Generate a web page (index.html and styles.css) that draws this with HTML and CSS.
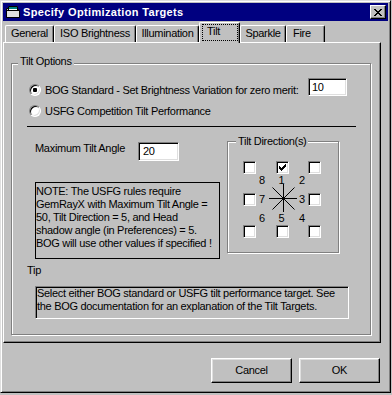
FILE: index.html
```html
<!DOCTYPE html>
<html>
<head>
<meta charset="utf-8">
<link rel="stylesheet" href="styles.css">
</head>
<body>
<div class="window">
  <div class="titlebar">
    <svg class="app-icon" width="14" height="12" viewBox="0 0 14 12">
      <path d="M0.5 2.5h5l1 1h6v8h-12z" fill="#c0c0c0" stroke="#000"/>
      <path d="M2.5 0.5h9v8h-9z" fill="#fff" stroke="#000"/>
      <path d="M3 1h8v2h-8z" fill="#008080"/>
      <path d="M1 5h12v6h-12z" fill="#dfdfdf"/>
      <path d="M0.5 4.5h13v7h-13z" fill="none" stroke="#000"/>
    </svg>
    <span class="title">Specify Optimization Targets</span>
    <button class="close" type="button">
      <svg width="8" height="7" viewBox="0 0 8 7"><path d="M0 0h2v1h-2zM6 0h2v1h-2zM1 1h2v1h-2zM5 1h2v1h-2zM2 2h4v1h-4zM3 3h2v1h-2zM2 4h4v1h-4zM1 5h2v1h-2zM5 5h2v1h-2zM0 6h2v1h-2zM6 6h2v1h-2z" fill="#000"/></svg>
    </button>
  </div>

  <div class="tabs">
    <div class="tab tab-general">General</div>
    <div class="tab tab-iso">ISO Brightness</div>
    <div class="tab tab-illum">Illumination</div>
    <div class="tab tab-tilt active"><span class="focus">Tilt</span></div>
    <div class="tab tab-sparkle">Sparkle</div>
    <div class="tab tab-fire">Fire</div>
  </div>

  <div class="panel">
    <div class="group options">
      <div class="group-title">Tilt Options</div>
      <div class="row row-bog">
        <span class="radio checked"></span>
        <span class="label bog-label">BOG Standard - Set Brightness Variation for zero merit:</span>
        <span class="edit edit-10">10</span>
      </div>
      <div class="row row-usfg">
        <span class="radio"></span>
        <span class="label">USFG Competition Tilt Performance</span>
      </div>
      <div class="sep"></div>
      <div class="mid">
        <div class="left">
          <div class="row angle-row">
            <span class="angle-label">Maximum Tilt Angle</span>
            <span class="edit edit-20">20</span>
          </div>
          <div class="note">NOTE: The USFG rules require<br>GemRayX with Maximum Tilt Angle =<br>50, Tilt Direction = 5, and Head<br>shadow angle (in Preferences) = 5.<br>BOG will use other values if specified !</div>
        </div>
        <div class="group dirs">
          <div class="group-title dirs-title">Tilt Direction(s)</div>
          <svg class="star" width="30" height="30" viewBox="0 0 30 30">
            <path d="M1 15.5H29M15.5 1V29M4.5 4.5L26.5 26.5M26.5 4.5L4.5 26.5" stroke="#000" stroke-width="1" fill="none"/>
          </svg>
          <div class="compass">
            <span class="check c1"></span>
            <span class="check c2 checked"><svg width="7" height="7" viewBox="0 0 7 7"><path d="M6 0h1v1h-1zM5 1h2v1h-2zM0 2h1v1h-1zM4 2h3v1h-3zM0 3h2v1h-2zM3 3h3v1h-3zM0 4h5v1h-5zM1 5h3v1h-3zM2 6h1v1h-1z" fill="#000"/></svg></span>
            <span class="check c3"></span>
            <span class="digit d8">8</span>
            <span class="digit d1">1</span>
            <span class="digit d2">2</span>
            <span class="check c4"></span>
            <span class="digit d7">7</span>
            <span class="digit d3">3</span>
            <span class="check c5"></span>
            <span class="digit d6">6</span>
            <span class="digit d5">5</span>
            <span class="digit d4">4</span>
            <span class="check c6"></span>
            <span class="check c7"></span>
            <span class="check c8"></span>
          </div>
        </div>
      </div>
      <div class="tip-label">Tip</div>
      <div class="tip">Select either BOG standard or USFG tilt performance target. See<br>the BOG documentation for an explanation of the Tilt Targets.</div>
    </div>
  </div>

  <div class="buttons">
    <button class="btn" type="button">Cancel</button>
    <button class="btn" type="button">OK</button>
  </div>
</div>
</body>
</html>
```

FILE: styles.css
```css
html, body {
  margin: 0;
  padding: 0;
}
body {
  width: 392px;
  height: 395px;
  background: #c0c0c0;
  font-family: "Liberation Sans", Arial, sans-serif;
  font-size: 11px;
  line-height: 13px;
  color: #000;
  letter-spacing: -0.3px;
}
.window {
  width: 391px;
  height: 393px;
  box-sizing: border-box;
  border: 1px solid;
  border-color: #dfdfdf #000 #000 #dfdfdf;
  box-shadow: inset 1px 1px 0 #fff, inset -1px -1px 0 #808080;
  padding: 2px;
  display: flex;
  flex-direction: column;
}
.titlebar {
  height: 18px;
  flex: none;
  background: #000080;
  display: flex;
  align-items: center;
  padding-left: 3px;
}
.app-icon {
  flex: none;
  margin-right: 3px;
}
.title {
  color: #fff;
  font-weight: bold;
  letter-spacing: 0.35px;
}
.close {
  margin: 0 2px 0 auto;
  width: 16px;
  height: 14px;
  padding: 0;
  box-sizing: border-box;
  background: #c0c0c0;
  border: 1px solid;
  border-color: #fff #000 #000 #fff;
  box-shadow: inset -1px -1px 0 #808080;
  display: flex;
  align-items: center;
  justify-content: center;
}
.close svg {
  display: block;
  margin-left: -1px;
}

.tabs {
  height: 21px;
  flex: none;
  display: flex;
  align-items: flex-end;
  padding-left: 2px;
}
.tab {
  box-sizing: border-box;
  height: 17px;
  border-top: 1px solid #fff;
  border-left: 1px solid #fff;
  border-right: 1px solid #000;
  border-radius: 2px 2px 0 0;
  box-shadow: inset -1px 0 0 #808080;
  padding-top: 1px;
  text-align: center;
  white-space: nowrap;
}
.tab-general { width: 49px; }
.tab-iso { width: 82px; }
.tab-illum { width: 63px; }
.tab-tilt { width: 41px; }
.tab-sparkle { width: 46px; }
.tab-fire { width: 39px; text-align: left; padding-left: 6px; }
.tab.active {
  height: 21px;
  margin-bottom: -1px;
  position: relative;
  z-index: 2;
  background: #c0c0c0;
  text-align: left;
  padding-top: 1px;
}
.focus {
  display: block;
  box-sizing: border-box;
  width: 36px;
  height: 17px;
  margin-left: 2px;
  padding-left: 4px;
  border: 1px dotted #000;
}

.panel {
  flex: none;
  width: 378px;
  height: 301px;
  box-sizing: border-box;
  border: 1px solid;
  border-color: #fff #000 #000 #fff;
  box-shadow: inset -1px -1px 0 #808080;
  position: relative;
  z-index: 1;
}

.group {
  box-sizing: border-box;
  border: 1px solid #808080;
  box-shadow: inset 1px 1px 0 #fff, 1px 1px 0 #fff;
}
.group-title {
  width: fit-content;
  padding: 0 2px;
  background: #c0c0c0;
  white-space: nowrap;
}
.options {
  margin: 20px 0 0 7px;
  width: 360px;
  height: 272px;
}
.options > .group-title {
  margin: -9px 0 0 6px;
}

.row {
  display: flex;
  align-items: flex-start;
}
.row-bog {
  margin-top: 10px;
  padding-left: 17px;
}
.row-bog .radio,
.row-bog .label {
  margin-top: 6px;
}
.row-usfg {
  margin-top: 8px;
  padding-left: 17px;
}
.label {
  margin-left: 4px;
  white-space: nowrap;
}
.bog-label {
  flex: none;
  width: 263px;
}

.radio {
  flex: none;
  width: 12px;
  height: 12px;
  box-sizing: border-box;
  border-radius: 50%;
  border: 1px solid;
  border-color: #808080 #fff #fff #808080;
  box-shadow: inset 1px 1px 0 #000, inset -1px -1px 0 #dfdfdf;
  background: #fff;
  display: flex;
  align-items: center;
  justify-content: center;
}
.radio.checked::after {
  content: "";
  width: 4px;
  height: 4px;
  border-radius: 1px;
  background: #000;
}

.edit {
  flex: none;
  box-sizing: border-box;
  background: #fff;
  border: 1px solid;
  border-color: #808080 #fff #fff #808080;
  box-shadow: inset 1px 1px 0 #000, inset -1px -1px 0 #dfdfdf;
  padding: 2px 0 0 3px;
}
.edit-10 {
  width: 39px;
  height: 18px;
}
.edit-20 {
  width: 41px;
  height: 19px;
  padding-left: 4px;
}

.sep {
  margin: 8px 0 0 15px;
  width: 329px;
  height: 1px;
  background: #000;
}

.mid {
  display: flex;
  align-items: flex-start;
  margin: 14px 0 0 23px;
}
.left {
  width: 185px;
  flex: none;
}
.angle-row {
  margin-top: 1px;
}
.angle-label {
  flex: none;
  width: 103px;
  white-space: nowrap;
}
.note {
  margin-top: 21px;
  height: 77px;
  box-sizing: border-box;
  border: 1px solid #000;
  padding: 2px 0 0 0;
  white-space: nowrap;
  overflow: hidden;
}

.dirs {
  flex: none;
  margin-left: 7px;
  width: 112px;
  height: 112px;
  position: relative;
}
.dirs-title {
  margin: -7px 0 0 8px;
}
.star {
  position: absolute;
  left: 40px;
  top: 41px;
  display: block;
}
.compass {
  margin: 13px 0 0 15px;
  display: grid;
  grid-template-columns: 13px 20px 13px 19px 13px;
  grid-template-rows: 13px 19px 13px 19px 13px;
  position: relative;
}
.check {
  box-sizing: border-box;
  width: 13px;
  height: 13px;
  background: #fff;
  border: 1px solid;
  border-color: #808080 #fff #fff #808080;
  box-shadow: inset 1px 1px 0 #000, inset -1px -1px 0 #dfdfdf;
  display: flex;
  align-items: center;
  justify-content: center;
}
.check svg { display: block; }
.c1 { grid-area: 1 / 1; }
.c2 { grid-area: 1 / 3; }
.c3 { grid-area: 1 / 5; }
.c4 { grid-area: 3 / 1; }
.c5 { grid-area: 3 / 5; }
.c6 { grid-area: 5 / 1; }
.c7 { grid-area: 5 / 3; }
.c8 { grid-area: 5 / 5; }
.digit {
  letter-spacing: 0;
}
.d8 { grid-area: 2 / 2; padding-left: 3px; align-self: start; }
.d1 { grid-area: 2 / 3; justify-self: center; margin-left: -2px; align-self: start; }
.d2 { grid-area: 2 / 4; justify-self: end; padding-right: 3px; align-self: start; }
.d7 { grid-area: 3 / 2; padding-left: 3px; }
.d3 { grid-area: 3 / 4; justify-self: end; padding-right: 3px; }
.d6 { grid-area: 4 / 2; padding-left: 3px; align-self: end; }
.d5 { grid-area: 4 / 3; justify-self: center; margin-left: -2px; align-self: end; }
.d4 { grid-area: 4 / 4; justify-self: end; padding-right: 3px; align-self: end; }

.tip-label {
  margin: 5px 0 0 15px;
}
.tip {
  margin: 9px 0 0 23px;
  width: 314px;
  height: 33px;
  box-sizing: border-box;
  border: 1px solid;
  border-color: #808080 #fff #fff #808080;
  box-shadow: inset 1px 1px 0 #000;
  padding: 0 0 0 1px;
  white-space: nowrap;
  overflow: hidden;
}

.buttons {
  flex: none;
  display: flex;
  justify-content: flex-end;
  gap: 7px;
  margin-top: 15px;
  padding-right: 8px;
}
.btn {
  width: 81px;
  height: 25px;
  box-sizing: border-box;
  background: #c0c0c0;
  border: 1px solid;
  border-color: #fff #000 #000 #fff;
  box-shadow: inset -1px -1px 0 #808080, inset 1px 1px 0 #dfdfdf;
  font: inherit;
  letter-spacing: inherit;
  color: #000;
  padding: 0;
}
```
